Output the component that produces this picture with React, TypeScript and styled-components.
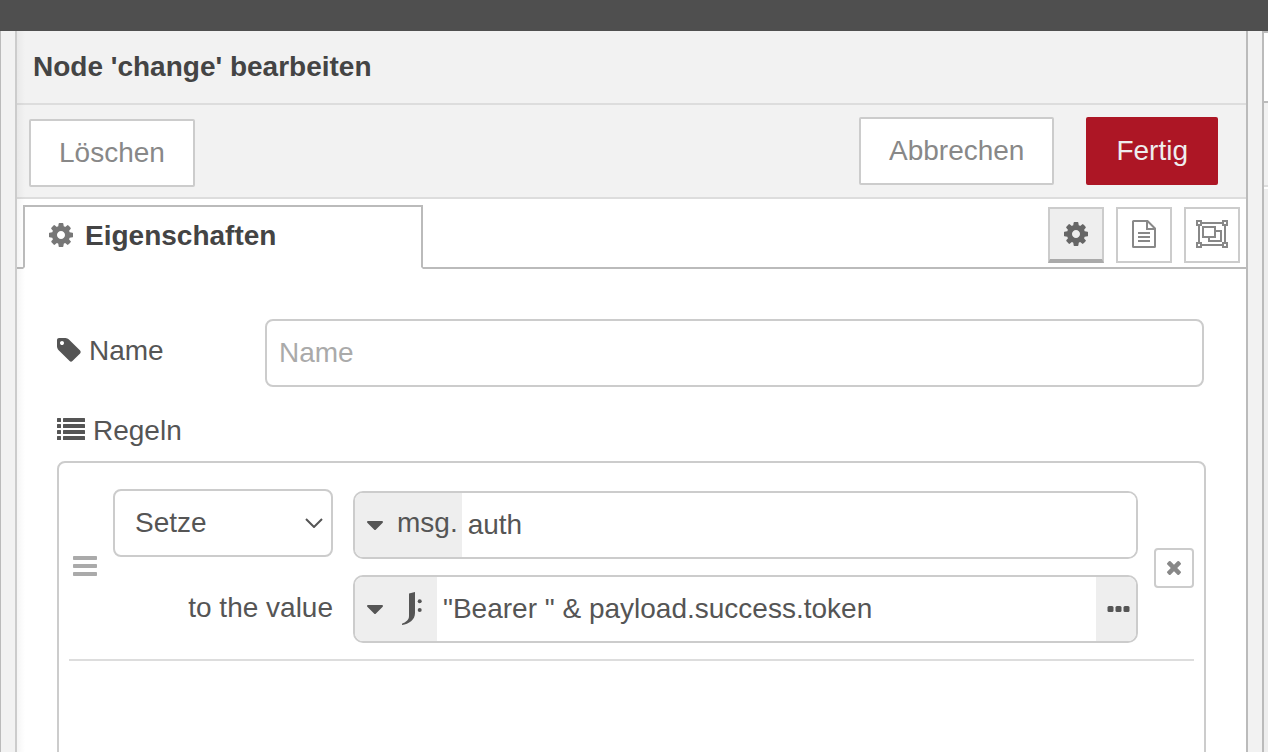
import React from "react";
import styled, { createGlobalStyle, css } from "styled-components";

const GlobalStyle = createGlobalStyle`
  *, *::before, *::after { box-sizing: border-box; }
  html, body, #root { height: 100%; }
  body {
    margin: 0;
    overflow: hidden;
    background: #fff;
    color: #555;
    font: 28px/40px "Liberation Sans", Arial, sans-serif;
  }
  button, input, select { font: inherit; color: inherit; margin: 0; }
  svg { display: block; flex: none; }
`;

const Page = styled.div`
  display: flex;
  flex-direction: column;
  height: 100vh;
`;

const TopBar = styled.div`
  flex: none;
  height: 31px;
  background: #4f4f4f;
`;

const Workspace = styled.div`
  flex: 1;
  min-height: 0;
  display: flex;
`;

const Palette = styled.div`
  flex: none;
  width: 15px;
  background: #f2f2f2;
  border-left: 1px solid #bbb;
`;

const Separator = styled.div`
  flex: none;
  width: 14px;
  background: #f2f2f2;
`;

const Sidebar = styled.aside`
  flex: none;
  width: 6px;
  border-left: 2px solid #bbb;
  background: #eee;
`;

const SidebarTab = styled.div`
  height: 72px;
  background: #fff;
  border: solid #bbb;
  border-width: 2px 0;
`;

const SidebarTools = styled.div`
  height: 84px;
  background: #f2f2f2;
  border-bottom: 2px solid #ddd;
  box-shadow: 0 2px 0 #fff;
`;

const Tray = styled.main`
  position: relative;
  flex: 1;
  min-width: 0;
  display: flex;
  flex-direction: column;
  overflow: hidden;
  background: #fff;
  border: solid;
  border-width: 0 2px;
  border-color: #bbb #bbb #bbb #ccc;

  &::after {
    content: "";
    position: absolute;
    inset: 0 auto 0 0;
    width: 8px;
    background: linear-gradient(to right, rgba(0, 0, 0, 0.04), transparent);
    pointer-events: none;
  }
`;

const TrayHeader = styled.header`
  flex: none;
  height: 74px;
  display: flex;
  align-items: center;
  padding: 0 16px;
  background: #f2f2f2;
  border-bottom: 2px solid #ddd;
`;

const Title = styled.h1`
  margin: 0;
  font-size: 28px;
  line-height: 40px;
  color: #444;
`;

const Toolbar = styled.div`
  flex: none;
  height: 94px;
  display: flex;
  justify-content: space-between;
  align-items: flex-start;
  padding: 12px 28px 10px 12px;
  background: #f2f2f2;
  border-bottom: 2px solid #ddd;
`;

const ToolbarGroup = styled.div<{ $low?: boolean }>`
  display: flex;
  gap: 32px;
  padding-top: ${(p) => (p.$low ? "2px" : "0")};
`;

const Button = styled.button<{ $primary?: boolean }>`
  height: 68px;
  padding: 0 28px;
  border: 2px solid ${(p) => (p.$primary ? "#ad1625" : "#ccc")};
  border-radius: 2px;
  background: ${(p) => (p.$primary ? "#ad1625" : "#fff")};
  color: ${(p) => (p.$primary ? "#eee" : "#888")};
`;

const TabBar = styled.div`
  flex: none;
  display: flex;
  justify-content: space-between;
  align-items: flex-start;
  height: 70px;
  padding: 6px 6px 0;
  box-shadow: inset 0 -2px 0 #bbb;
`;

const Tab = styled.button`
  display: flex;
  align-items: center;
  gap: 12px;
  width: 400px;
  height: 64px;
  padding: 0 24px 2px;
  border: 2px solid #bbb;
  border-bottom-color: #fff;
  background: #fff;
  color: #444;
  font-weight: bold;

  svg { margin-bottom: 2px; color: #777; }
`;

const TabTools = styled.div`
  display: flex;
  gap: 12px;
  padding-top: 2px;
`;

const ToolButton = styled.button<{ $active?: boolean }>`
  display: flex;
  align-items: center;
  justify-content: center;
  width: 56px;
  height: 56px;
  padding: 0 0 2px;
  border: 2px solid #ccc;
  background: #fff;
  color: #888;
  ${(p) =>
    p.$active &&
    css`
      padding: 0;
      border-bottom: 4px solid #aaa;
      background: #eee;
      color: #666;
    `}
`;

const Form = styled.form`
  flex: 1;
  display: flex;
  flex-direction: column;
  padding: 50px 40px 0;
`;

const FieldRow = styled.div`
  display: flex;
  align-items: center;
  padding-right: 2px;
`;

const Label = styled.label`
  display: flex;
  align-items: center;
  gap: 8px;
  width: 208px;
  padding-bottom: 4px;

  svg { margin-bottom: 2px; }
`;

const frame = css`
  height: 68px;
  border: 2px solid #ccc;
  border-radius: 8px;
  background: #fff;
`;

const TextInput = styled.input`
  ${frame}
  flex: 1;
  min-width: 0;
  padding: 0 12px;
  outline: 0;
  &::placeholder { color: #aaa; opacity: 1; }
`;

const SectionTitle = styled.div`
  display: flex;
  align-items: center;
  gap: 8px;
  height: 40px;
  margin: 24px 0 10px;

  svg { margin-bottom: 4px; }
`;

const RuleList = styled.ol`
  flex: 1 0 400px;
  margin: 0;
  padding: 10px;
  list-style: none;
  border: 2px solid #ccc;
  border-radius: 8px;
`;

const Rule = styled.li`
  display: flex;
  align-items: center;
  gap: 16px;
  padding: 18px 0 16px;
  border-bottom: 2px solid #ddd;
`;

const RuleGrid = styled.div`
  flex: 1;
  min-width: 0;
  display: grid;
  grid-template-columns: 220px 1fr;
  gap: 16px 20px;
`;

const RuleLabel = styled.label`
  align-self: center;
  text-align: right;
  padding-bottom: 2px;
`;

const SelectWrap = styled.div`
  display: grid;
  align-items: center;
  height: 68px;
  margin-top: -2px;

  > * { grid-area: 1 / 1; }
  svg { justify-self: end; margin-right: 10px; pointer-events: none; }
`;

const Select = styled.select`
  ${frame}
  appearance: none;
  width: 100%;
  padding: 0 40px 0 20px;
`;

const TypedInput = styled.div`
  ${frame}
  display: flex;
  overflow: hidden;
  border-radius: 10px;
`;

const TypeButton = styled.button<{ $icon?: boolean }>`
  display: flex;
  align-items: center;
  padding: 0 ${(p) => (p.$icon ? "14px" : "4px")} 0 12px;
  gap: ${(p) => (p.$icon ? "18px" : "14px")};
  border: 0;
  background: #eee;

  span { padding-bottom: 4px; }
`;

const ExpandButton = styled.button`
  display: flex;
  align-items: center;
  justify-content: flex-end;
  width: 40px;
  padding: 0 6px 0 0;
  border: 0;
  background: #eee;
`;

const ValueInput = styled.input`
  flex: 1;
  min-width: 0;
  padding: 0 6px;
  border: 0;
  outline: 0;
  background: #fff;
`;

const RemoveButton = styled.button`
  display: flex;
  align-items: center;
  justify-content: center;
  width: 40px;
  height: 40px;
  margin-top: 2px;
  padding: 0;
  border: 2px solid #ccc;
  border-radius: 4px;
  background: #fff;
  color: #888;
`;

const Handle = styled.div`
  width: 28px;
  padding: 0 0 2px 4px;
  color: #aaa;
`;

const CogIcon = () => (
  <svg width="24" height="24" viewBox="128 128 1536 1536" fill="currentColor" aria-hidden="true">
    <path d="M1152 896q0-106-75-181t-181-75-181 75-75 181 75 181 181 75 181-75 75-181zm512-109v222q0 12-8 23t-20 13l-185 28q-19 54-39 91 35 50 107 138 10 12 10 25t-9 23q-27 37-99 108t-94 71q-12 0-26-9l-138-108q-44 23-91 38-16 136-29 186-7 28-36 28h-222q-14 0-24.5-8.5t-11.5-21.5l-28-184q-49-16-90-37l-141 107q-10 9-25 9-14 0-25-11-126-114-165-168-7-10-7-23 0-12 8-23 15-21 51-66.5t54-70.5q-27-50-41-99l-183-27q-13-2-21-12.5t-8-23.5v-222q0-12 8-23t19-13l186-28q14-46 39-92-40-57-107-138-10-12-10-24 0-10 9-23 26-36 98.5-107.5t94.5-71.5q13 0 26 10l138 107q44-23 91-38 16-136 29-186 7-28 36-28h222q14 0 24.5 8.5t11.5 21.5l28 184q49 16 90 37l142-107q9-9 24-9 13 0 25 10 129 119 165 170 7 8 7 22 0 12-8 23-15 21-51 66.5t-54 70.5q26 50 41 98l183 28q13 2 21 12.5t8 23.5z" />
  </svg>
);

const TagIcon = () => (
  <svg width="24" height="24" viewBox="128 128 1536 1536" fill="currentColor" aria-hidden="true">
    <path d="M576 448q0-53-37.5-90.5t-90.5-37.5-90.5 37.5-37.5 90.5 37.5 90.5 90.5 37.5 90.5-37.5 37.5-90.5zm1067 576q0 53-37 90l-491 492q-39 37-91 37-53 0-90-37l-715-716q-38-37-64.5-101t-26.5-117v-416q0-52 38-90t90-38h416q53 0 117 26.5t102 64.5l715 714q37 39 37 91z" />
  </svg>
);

const FileIcon = () => (
  <svg width="24" height="28" viewBox="0 0 24 28" fill="none" stroke="currentColor" strokeWidth="2" aria-hidden="true">
    <path d="M2 1H15.5L23 8.500V26.500a.5.5 0 0 1-.5.5H1.500a.5.5 0 0 1-.5-.5V1.500a.5.5 0 0 1 .5-.5z" />
    <path d="M15 1V9H23M6 13H18M6 17H18M6 21H18" />
  </svg>
);

const GroupIcon = () => (
  <svg width="32" height="28" viewBox="0 0 32 28" fill="none" stroke="currentColor" strokeWidth="2" aria-hidden="true">
    <path d="M6 3H26M6 25H26M3 6V22M29 6V22" />
    <path d="M1 1H5V5H1zM27 1H31V5H27zM1 23H5V27H1zM27 23H31V27H27z" />
    <path d="M7 7H19V17H7zM19 11H25V21H13V17" />
  </svg>
);

const ListIcon = () => (
  <svg width="28" height="22" viewBox="0 0 28 22" fill="currentColor" aria-hidden="true">
    {[0, 6, 12, 18].map((y) => (
      <g key={y}>
        <rect y={y} width="4" height="4" rx=".5" />
        <rect x="6" y={y} width="22" height="4" rx=".5" />
      </g>
    ))}
  </svg>
);

const BarsIcon = () => (
  <svg width="24" height="20" viewBox="0 0 24 20" fill="currentColor" aria-hidden="true">
    {[0, 8, 16].map((y) => (
      <rect key={y} y={y} width="24" height="4" rx=".8" />
    ))}
  </svg>
);

const CaretIcon = () => (
  <svg width="16" height="9" viewBox="0 0 16 9" fill="currentColor" aria-hidden="true">
    <path d="M1 0H15a1 1 0 0 1 .7 1.700L8.700 8.700a1 1 0 0 1-1.400 0L.3 1.700A1 1 0 0 1 1 0z" />
  </svg>
);

const JsonataIcon = () => (
  <svg width="22" height="34" viewBox="0 0 22 34" fill="currentColor" aria-hidden="true">
    <path d="M8 1.600L14 0V21C14 28 8 32 1 33V31.800C5 30 8 28 8 24z" />
    <circle cx="18.700" cy="9.300" r="2" />
    <circle cx="18.700" cy="18" r="2" />
  </svg>
);

const DotsIcon = () => (
  <svg width="23" height="6" viewBox="0 0 23 6" fill="currentColor" aria-hidden="true">
    {[0, 8, 16].map((x) => (
      <rect key={x} x={x + 0.5} width="6" height="6" rx="1.500" />
    ))}
  </svg>
);

const ChevronIcon = () => (
  <svg width="18" height="10" viewBox="0 0 18 10" fill="none" stroke="currentColor" strokeWidth="2" aria-hidden="true">
    <path d="M1 1L9 9L17 1" />
  </svg>
);

const CloseIcon = () => (
  <svg width="14" height="14" viewBox="302 366 1188 1188" fill="currentColor" aria-hidden="true">
    <path d="M1490 1322q0 40-28 68l-136 136q-28 28-68 28t-68-28l-294-294-294 294q-28 28-68 28t-68-28l-136-136q-28-28-28-68t28-68l294-294-294-294q-28-28-28-68t28-68l136-136q28-28 68-28t68 28l294 294 294-294q28-28 68-28t68 28l136 136q28 28 28 68t-28 68l-294 294 294 294q28 28 28 68z" />
  </svg>
);

export default function App() {
  return (
    <Page>
      <GlobalStyle />
      <TopBar />
      <Workspace>
        <Palette />
        <Tray>
          <TrayHeader>
            <Title>Node 'change' bearbeiten</Title>
          </TrayHeader>
          <Toolbar>
            <ToolbarGroup $low>
              <Button type="button">Löschen</Button>
            </ToolbarGroup>
            <ToolbarGroup>
              <Button type="button">Abbrechen</Button>
              <Button type="button" $primary>Fertig</Button>
            </ToolbarGroup>
          </Toolbar>
          <TabBar>
            <Tab type="button">
              <CogIcon />
              Eigenschaften
            </Tab>
            <TabTools>
              <ToolButton type="button" $active aria-label="Eigenschaften"><CogIcon /></ToolButton>
              <ToolButton type="button" aria-label="Beschreibung"><FileIcon /></ToolButton>
              <ToolButton type="button" aria-label="Darstellung"><GroupIcon /></ToolButton>
            </TabTools>
          </TabBar>
          <Form>
            <FieldRow>
              <Label htmlFor="node-name"><TagIcon />Name</Label>
              <TextInput id="node-name" type="text" placeholder="Name" />
            </FieldRow>
            <SectionTitle><ListIcon />Regeln</SectionTitle>
            <RuleList>
              <Rule>
                <Handle><BarsIcon /></Handle>
                <RuleGrid>
                  <SelectWrap>
                    <Select aria-label="Aktion" defaultValue="set">
                      <option value="set">Setze</option>
                    </Select>
                    <ChevronIcon />
                  </SelectWrap>
                  <TypedInput>
                    <TypeButton type="button"><CaretIcon /><span>msg.</span></TypeButton>
                    <ValueInput type="text" aria-label="Eigenschaft" defaultValue="auth" />
                  </TypedInput>
                  <RuleLabel htmlFor="rule-value">to the value</RuleLabel>
                  <TypedInput>
                    <TypeButton type="button" $icon aria-label="JSONata"><CaretIcon /><JsonataIcon /></TypeButton>
                    <ValueInput id="rule-value" type="text" defaultValue={'"Bearer " & payload.success.token'} />
                    <ExpandButton type="button" aria-label="Erweitern"><DotsIcon /></ExpandButton>
                  </TypedInput>
                </RuleGrid>
                <RemoveButton type="button" aria-label="Entfernen"><CloseIcon /></RemoveButton>
              </Rule>
            </RuleList>
          </Form>
        </Tray>
        <Separator />
        <Sidebar>
          <SidebarTab />
          <SidebarTools />
        </Sidebar>
      </Workspace>
    </Page>
  );
}
